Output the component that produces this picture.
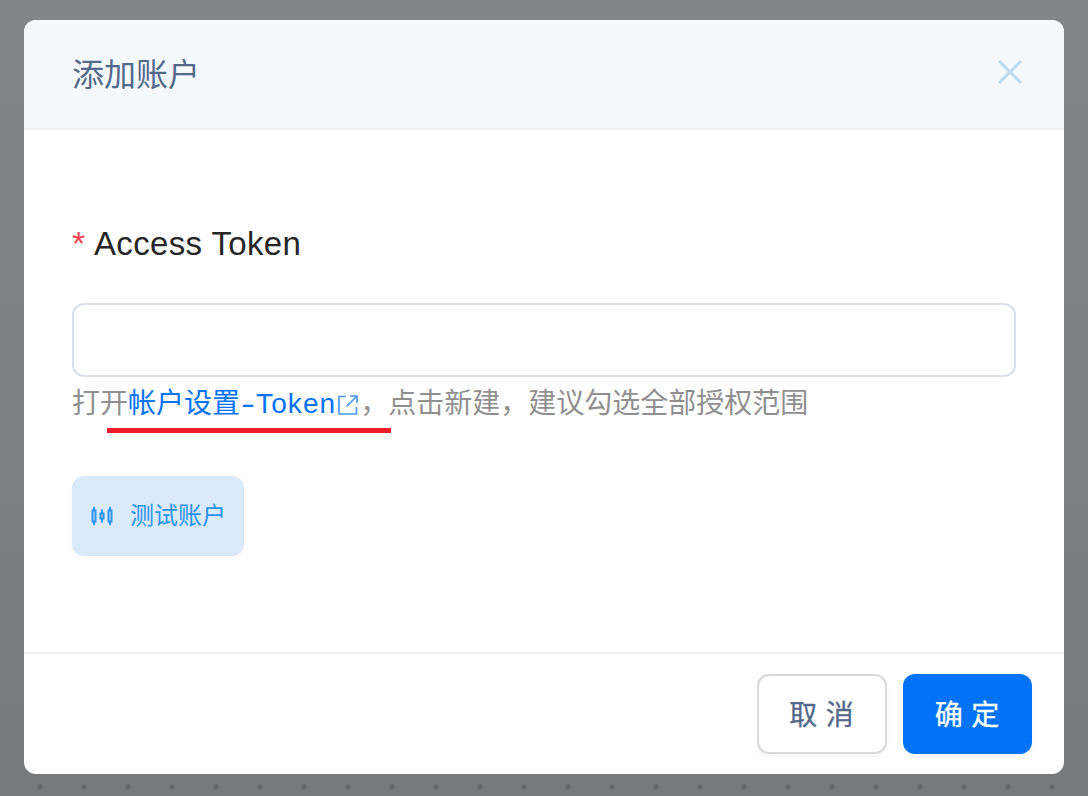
<script>
  const steps = ['打开', '，点击新建，建议勾选全部授权范围'];
</script>

<div class="page">
  <div class="modal">
    <header class="head">
      <h2>添加账户</h2>
      <svg class="close" viewBox="0 0 24 24" width="24" height="24" aria-label="关闭">
        <path d="M1 1 L23 23 M23 1 L1 23" />
      </svg>
    </header>

    <section class="body">
      <label class="label" for="token"><span class="req">*</span>Access Token</label>
      <input id="token" class="input" type="text" />
      <p class="hint">
        {steps[0]}<span class="link">帐户设置<span class="dash">-</span><span class="latin">Token</span><svg class="ext" viewBox="0 0 22 22" width="22" height="22"><path d="M9 2.5 H2 V20 H19.5 V13 M9.5 12.5 L20 2 M13 2 H20 V9" /></svg></span>{steps[1]}
        <span class="mark"></span>
      </p>
      <button class="test" type="button">
        <svg viewBox="0 0 24 24" width="24" height="24">
          <path d="M2.5 6.5 H5.5 V17.5 H2.5 Z M4 3 V6.5 M4 17.5 V21 M10.5 9.5 H13.5 V14.5 H10.5 Z M12 5.5 V9.5 M12 14.5 V18.5 M18.5 6.5 H21.5 V17.5 H18.5 Z M20 3 V6.5 M20 17.5 V21" />
        </svg>
        <span class="test-text">测试账户</span>
      </button>
    </section>

    <footer class="foot">
      <button class="btn cancel" type="button"><span>取 消</span></button>
      <button class="btn ok" type="button"><span>确 定</span></button>
    </footer>
  </div>
  <div class="dots"></div>
</div>

<style>
  :global(body) {
    margin: 0;
    background: #7e7f81;
  }
  .page {
    width: 1088px;
    height: 796px;
    box-sizing: border-box;
    padding: 20px 24px 0;
    overflow: hidden;
    background: linear-gradient(180deg, #848586 0%, #78797b 100%);
    font-family: "Liberation Sans", "Noto Sans CJK SC", sans-serif;
  }
  .modal {
    width: 1040px;
    height: 754px;
    display: flex;
    flex-direction: column;
    background: #fff;
    border-radius: 12px;
    overflow: hidden;
  }
  .head {
    height: 110px;
    box-sizing: border-box;
    flex: none;
    padding: 0 42px 4px 48px;
    display: flex;
    align-items: center;
    justify-content: space-between;
    background: #f4f9fe;
    border-bottom: 2px solid #eef0f3;
  }
  h2 {
    margin: 0;
    font-size: 32px;
    font-weight: 400;
    line-height: 44px;
    color: #54688a;
    font-family: "Noto Sans CJK SC", sans-serif;
  }
  .close path {
    fill: none;
    stroke: #bcd8ee;
    stroke-width: 2.8;
  }
  .body {
    flex: 1;
    padding: 0 48px;
    display: flex;
    flex-direction: column;
    align-items: flex-start;
  }
  .label {
    margin-top: 94px;
    margin-bottom: 1px;
    font-size: 33px;
    line-height: 40px;
    color: #262626;
    letter-spacing: 0.35px;
    display: flex;
    align-items: center;
  }
  .req {
    color: #fb4652;
    width: 22px;
    font-size: 34px;
    line-height: 40px;
    letter-spacing: 0;
    position: relative;
    top: -1px;
  }
  .input {
    display: block;
    margin-top: 38px;
    width: 944px;
    height: 74px;
    box-sizing: border-box;
    border: 2px solid #d7e1ec;
    border-radius: 12px;
    background: #fff;
    outline: none;
  }
  .hint {
    position: relative;
    margin: 7px 0 0;
    font-size: 28px;
    line-height: 40px;
    color: #8f8f8f;
    white-space: nowrap;
    font-family: "Liberation Sans", "Noto Sans CJK SC", sans-serif;
  }
  .link {
    color: #0273f6;
  }
  .dash {
    display: inline-block;
    width: 16px;
    text-align: center;
    transform: scaleX(1.5);
  }
  .latin {
    letter-spacing: 1.1px;
  }
  .ext {
    vertical-align: -3px;
    margin-left: 1px;
    margin-right: 1px;
  }
  .ext path {
    fill: none;
    stroke: #4a97f2;
    stroke-width: 1.7;
  }
  .mark {
    position: absolute;
    left: 35px;
    top: 44px;
    width: 284px;
    height: 5px;
    background: #f01c2c;
  }
  .test {
    margin-top: 52px;
    width: 172px;
    height: 80px;
    padding: 0 0 0 18px;
    box-sizing: border-box;
    border: 0;
    border-radius: 12px;
    background: #d9eafa;
    color: #2b92ec;
    display: flex;
    align-items: center;
    gap: 16px;
    font-size: 24px;
    font-family: "Noto Sans CJK SC", sans-serif;
    box-shadow: 0 3px 4px rgba(0, 0, 0, 0.02);
  }
  .test-text {
    margin-top: -6px;
  }
  .test path {
    fill: none;
    stroke: #2b92ec;
    stroke-width: 2;
  }
  .foot {
    height: 122px;
    flex: none;
    box-sizing: border-box;
    border-top: 2px solid #eeeff1;
    padding: 20px 32px 0 0;
    display: flex;
    justify-content: flex-end;
    align-items: flex-start;
    gap: 16px;
  }
  .btn {
    width: 130px;
    height: 80px;
    box-sizing: border-box;
    border-radius: 12px;
    font-size: 28px;
    letter-spacing: 1px;
    font-family: "Noto Sans CJK SC", sans-serif;
    box-shadow: 0 3px 4px rgba(0, 0, 0, 0.03);
  }
  .btn span {
    display: block;
    margin-top: -2px;
    -webkit-text-stroke: 0.3px currentColor;
  }
  .cancel {
    background: #fff;
    border: 2px solid #d9d9d9;
    color: #54688a;
  }
  .ok {
    width: 129px;
    background: #0273f6;
    border: 0;
    color: #fff;
  }
  .dots {
    height: 22px;
    margin: 0 -24px;
    background-image: radial-gradient(circle at 40px 13px, #636466 0, #646567 1.5px, transparent 3.5px);
    background-size: 44px 22px;
    background-position: 0 0;
  }
</style>
